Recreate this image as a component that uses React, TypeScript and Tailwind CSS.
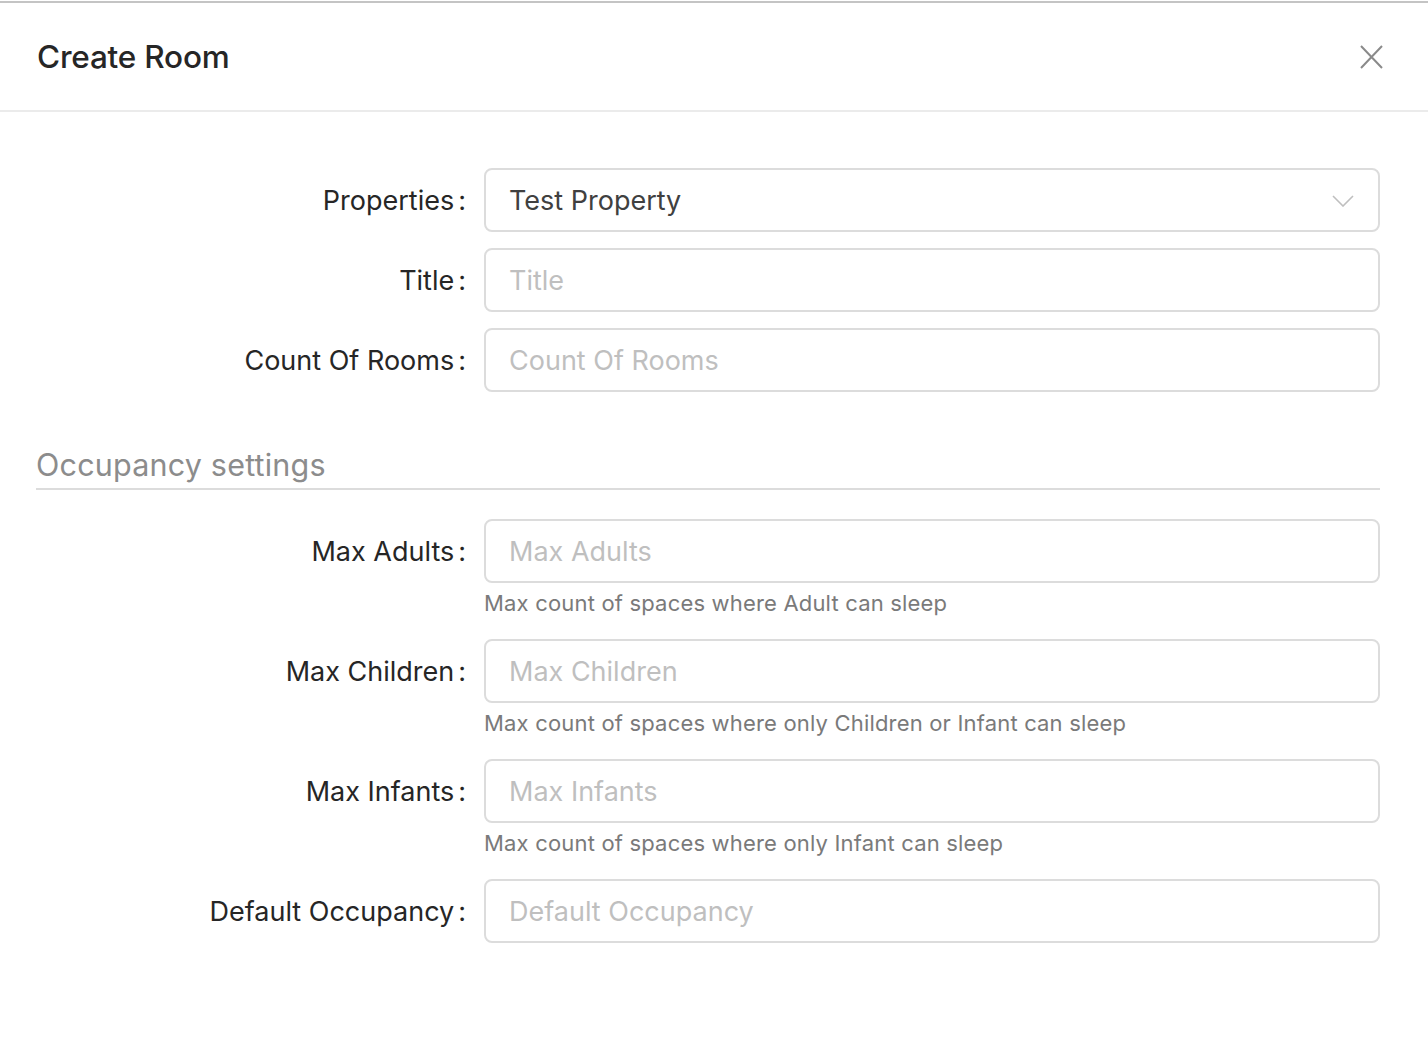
import React from "react";

const font = { fontFamily: "Inter, 'Noto Sans', sans-serif" };

function Label({ text }: { text: string }) {
  return (
    <div className="w-[448px] shrink-0 h-[64px] flex items-center justify-end pr-[18px] pt-[2px] text-[27px] text-[#262626]">
      <span>{text}</span>
      <span className="ml-[4px]">:</span>
    </div>
  );
}

function Field({
  label,
  placeholder,
  help,
  last,
}: {
  label: string;
  placeholder: string;
  help?: string;
  last?: boolean;
}) {
  return (
    <div className={`flex items-start ${last ? "" : help ? "mb-[18px]" : "mb-[16px]"}`}>
      <Label text={label} />
      <div className="flex-1 flex flex-col">
        <div className="h-[64px] border-2 border-[#dcdcdc] rounded-[8px] pl-[23px] pt-[2px] flex items-center text-[27px] text-[#bfbfbf]">
          {placeholder}
        </div>
        {help && (
          <div className="mt-[2px] leading-[36px] text-[22px] tracking-[0.18px] text-[#7a7a7a]">{help}</div>
        )}
      </div>
    </div>
  );
}

export default function App() {
  return (
    <div className="w-[1428px] h-[1054px] bg-white pt-px" style={font}>
      <div className="border-t-2 border-[#c4c4c4]" />
      <div className="h-[109px] flex items-center justify-between pl-[37px] pr-[45px] border-b-2 border-[#ebebeb]">
        <div className="text-[31.5px] font-medium text-[#262626] tracking-[-0.2px]">Create Room</div>
        <svg width="23" height="24" viewBox="0 0 23 24" fill="none">
          <path d="M1 1L22 23M22 1L1 23" stroke="#8a8a8a" strokeWidth="2" />
        </svg>
      </div>
      <div className="pt-[56px] pl-[36px] pr-[48px]">
        <div className="flex items-start mb-[16px]">
          <Label text="Properties" />
          <div className="flex-1 h-[64px] border-2 border-[#dcdcdc] rounded-[8px] pl-[23px] pr-[24px] pt-[2px] flex items-center justify-between text-[27px] text-[#404040]">
            <span>Test Property</span>
            <svg width="22" height="12" viewBox="0 0 22 12" fill="none">
              <path d="M1 1L11 11L21 1" stroke="#bfbfbf" strokeWidth="1.6" />
            </svg>
          </div>
        </div>
        <Field label="Title" placeholder="Title" />
        <Field label="Count Of Rooms" placeholder="Count Of Rooms" last />

        <div className="mt-[53px] border-b-2 border-[#dcdcdc] pb-[3px] text-[30.5px] tracking-[0.2px] leading-[40px] text-[#8c8c8c]">
          Occupancy settings
        </div>

        <div className="mt-[29px]">
          <Field
            label="Max Adults"
            placeholder="Max Adults"
            help="Max count of spaces where Adult can sleep"
          />
          <Field
            label="Max Children"
            placeholder="Max Children"
            help="Max count of spaces where only Children or Infant can sleep"
          />
          <Field
            label="Max Infants"
            placeholder="Max Infants"
            help="Max count of spaces where only Infant can sleep"
          />
          <Field label="Default Occupancy" placeholder="Default Occupancy" last />
        </div>
      </div>
    </div>
  );
}
